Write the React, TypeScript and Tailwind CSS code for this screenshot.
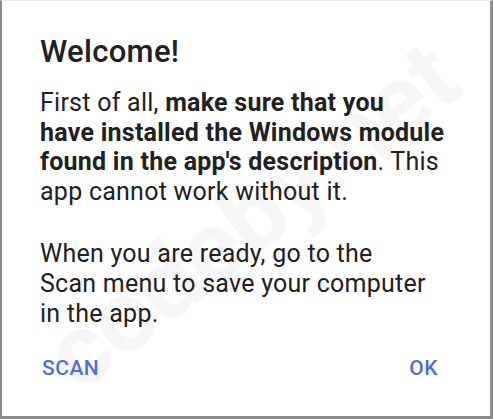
import React from "react";

export default function App() {
  return (
    <div
      className="relative w-[493px] h-[419px] bg-white border-l-2 border-r-[3px] border-b-[3px] border-t border-l-[#8a8a8a] border-r-[#8f8f8f] border-b-[#8a8a8a] border-t-[#ececec] overflow-hidden flex flex-col"
      style={{ fontFamily: "Roboto, 'Noto Sans', sans-serif" }}
    >
      <div className="pointer-events-none absolute left-[250px] top-[215px] -translate-x-1/2 -translate-y-1/2 -rotate-[38deg] whitespace-nowrap text-[100px] font-bold text-[#f6f6f6] leading-none">
        codeby.net
      </div>
      <div className="relative flex flex-col pl-[38px] pt-[33px] text-[#212121]">
        <div className="text-[31px] leading-[36px] font-medium tracking-[0.3px]">Welcome!</div>
        <div className="mt-[18px] text-[25px] leading-[29.6px] tracking-[0.25px] whitespace-nowrap">
          First of all, <span className="font-bold">make sure that you</span>
          <br />
          <span className="font-bold">have installed the Windows module</span>
          <br />
          <span className="font-bold">found in the app's description</span>. This
          <br />
          app cannot work without it.
        </div>
        <div className="mt-[33px] text-[25px] leading-[29.6px] tracking-[0.25px] whitespace-nowrap">
          When you are ready, go to the
          <br />
          Scan menu to save your computer
          <br />
          in the app.
        </div>
      </div>
      <div className="relative flex justify-between pl-[40px] pr-[52px] mt-[28px] text-[21px] leading-[24px] font-medium tracking-[0.5px] text-[#4e6ee2]">
        <span>SCAN</span>
        <span>OK</span>
      </div>
    </div>
  );
}
